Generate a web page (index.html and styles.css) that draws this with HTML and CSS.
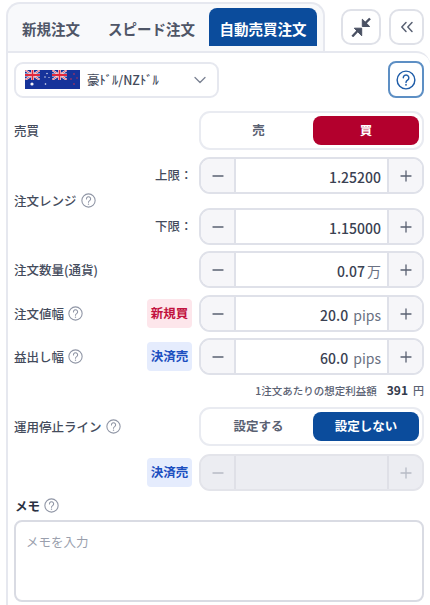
FILE: index.html
```html
<!DOCTYPE html>
<html lang="ja">
<head>
<meta charset="utf-8">
<title>自動売買注文</title>
<link rel="stylesheet" href="styles.css">
</head>
<body>
<svg class="defs" width="0" height="0" aria-hidden="true">
  <defs>
    <symbol id="q" viewBox="0 0 14 14">
      <circle cx="7" cy="7" r="6.2" fill="none" stroke="currentColor" stroke-width="1"/>
      <path d="M5.1 5.5a1.95 1.95 0 1 1 3 1.6c-.7.45-1.1.8-1.1 1.6" fill="none" stroke="currentColor" stroke-width="1" stroke-linecap="round"/>
      <circle cx="7" cy="10.4" r=".65" fill="currentColor"/>
    </symbol>
    <symbol id="minus" viewBox="0 0 12 12"><path d="M1 6h10" stroke="currentColor" stroke-width="1.3" stroke-linecap="round"/></symbol>
    <symbol id="plus" viewBox="0 0 12 12"><path d="M1 6h10M6 1v10" stroke="currentColor" stroke-width="1.3" stroke-linecap="round"/></symbol>
    <symbol id="jack" viewBox="0 0 15 10">
      <rect width="15" height="10" fill="#16339a"/>
      <path d="M0 0l15 10M15 0L0 10" stroke="#f4f4f8" stroke-width="2"/>
      <path d="M0 0l15 10M15 0L0 10" stroke="#e0354a" stroke-width=".8"/>
      <path d="M7.5 0v10M0 5h15" stroke="#f4f4f8" stroke-width="3"/>
      <path d="M7.5 0v10M0 5h15" stroke="#e0283c" stroke-width="1.8"/>
    </symbol>
  </defs>
</svg>
<div class="top">
  <div class="tabs">
    <div class="tab">新規注文</div>
    <div class="tab tab-speed">スピード注文</div>
    <div class="tab tab-active">自動売買注文</div>
  </div>
  <div class="top-btns">
    <button class="icon-btn btn-collapse" aria-label="縮小">
      <svg width="20" height="20" viewBox="0 0 20 20"><path d="M11.3 2.2v7.3h7.4Z" fill="#4a5163" stroke="#4a5163" stroke-linejoin="round"/><path d="M13.5 7 19 1.5" stroke="#4a5163" stroke-width="2.4"/><path d="M3.3 11.2h7.4v7.6Z" fill="#4a5163" stroke="#4a5163" stroke-linejoin="round"/><path d="M6.5 14 1.3 19.5" stroke="#4a5163" stroke-width="2.4"/></svg>
    </button>
    <button class="icon-btn btn-back" aria-label="閉じる">
      <svg width="14" height="12" viewBox="0 0 14 12"><path d="M6 1.5 1.8 6 6 10.5M12 1.5 7.8 6l4.2 4.5" fill="none" stroke="#5a6274" stroke-width="1.5" stroke-linecap="round" stroke-linejoin="round"/></svg>
    </button>
  </div>
</div>
<main class="panel">
  <div class="pair-row">
    <div class="select">
      <svg class="flag" width="55" height="19" viewBox="0 0 55 19">
        <rect width="55" height="19" fill="#16339a"/>
        <use href="#jack" x="0" y="0" width="15" height="10"/>
        <use href="#jack" x="27" y="0" width="15" height="10"/>
        <g fill="#f4f4f8"><circle cx="7" cy="14" r="1.6"/><circle cx="20" cy="7" r=".7"/><circle cx="22" cy="3.5" r=".7"/><circle cx="20.5" cy="14" r=".8"/><circle cx="24" cy="7.5" r=".6"/></g>
        <g fill="#d6324a"><circle cx="49" cy="4" r=".8"/><circle cx="46" cy="9" r=".8"/><circle cx="52" cy="8" r=".7"/><circle cx="49" cy="14" r=".8"/></g>
      </svg>
      <span class="pair-name">豪ﾄﾞﾙ/NZﾄﾞﾙ</span>
      <svg class="chev" width="14" height="8" viewBox="0 0 14 8"><path d="M2 1.5 7 6.5l5-5" fill="none" stroke="#7b8293" stroke-width="1.3" stroke-linecap="round" stroke-linejoin="round"/></svg>
    </div>
    <button class="help-btn" aria-label="ヘルプ"><svg width="20" height="20"><use href="#q"/></svg></button>
  </div>

  <div class="row row-side">
    <div class="label">売買</div>
    <div class="toggle"><span class="opt">売</span><span class="opt opt-buy">買</span></div>
  </div>

  <div class="range">
    <div class="label">注文レンジ<svg class="qi"><use href="#q"/></svg></div>
    <div class="range-rows">
      <div class="row row-upper">
        <span class="limit">上限：</span>
        <div class="stepper"><span class="sb"><svg width="12" height="12"><use href="#minus"/></svg></span><span class="val">1.25200</span><span class="sb"><svg width="12" height="12"><use href="#plus"/></svg></span></div>
      </div>
      <div class="row row-lower">
        <span class="limit">下限：</span>
        <div class="stepper"><span class="sb"><svg width="12" height="12"><use href="#minus"/></svg></span><span class="val">1.15000</span><span class="sb"><svg width="12" height="12"><use href="#plus"/></svg></span></div>
      </div>
    </div>
  </div>

  <div class="row row-qty">
    <div class="label">注文数量(通貨)</div>
    <div class="stepper"><span class="sb"><svg width="12" height="12"><use href="#minus"/></svg></span><span class="val">0.07<span class="unit unit-man">万</span></span><span class="sb"><svg width="12" height="12"><use href="#plus"/></svg></span></div>
  </div>

  <div class="row row-width">
    <div class="label">注文値幅<svg class="qi"><use href="#q"/></svg></div>
    <span class="tag tag-buy">新規買</span>
    <div class="stepper"><span class="sb"><svg width="12" height="12"><use href="#minus"/></svg></span><span class="val">20.0<span class="unit">pips</span></span><span class="sb"><svg width="12" height="12"><use href="#plus"/></svg></span></div>
  </div>

  <div class="row row-profit">
    <div class="label">益出し幅<svg class="qi"><use href="#q"/></svg></div>
    <span class="tag tag-sell">決済売</span>
    <div class="stepper"><span class="sb"><svg width="12" height="12"><use href="#minus"/></svg></span><span class="val">60.0<span class="unit">pips</span></span><span class="sb"><svg width="12" height="12"><use href="#plus"/></svg></span></div>
  </div>

  <div class="estimate">1注文あたりの想定利益額<b>391</b><span class="yen">円</span></div>

  <div class="row row-stop">
    <div class="label">運用停止ライン<svg class="qi"><use href="#q"/></svg></div>
    <div class="toggle"><span class="opt">設定する</span><span class="opt opt-on">設定しない</span></div>
  </div>

  <div class="row row-off">
    <span class="tag tag-sell">決済売</span>
    <div class="stepper stepper-off"><span class="sb"><svg width="12" height="12"><use href="#minus"/></svg></span><span class="val"></span><span class="sb"><svg width="12" height="12"><use href="#plus"/></svg></span></div>
  </div>

  <div class="memo-label">メモ<svg class="qi"><use href="#q"/></svg></div>
  <div class="memo">メモを入力</div>
</main>
</body>
</html>
```
FILE: styles.css
```css
* { box-sizing: border-box; }
html, body { margin: 0; padding: 0; }
body {
  width: 430px;
  height: 605px;
  overflow: hidden;
  background: #fff;
  font-family: "Noto Sans CJK JP", "Noto Sans", sans-serif;
  color: #444b5c;
  font-size: 12.5px;
}
.defs { position: absolute; }
.top {
  display: flex;
  margin-left: 6px;
  padding-top: 2px;
  height: 51px;
}
.tabs {
  width: 319px;
  height: 49px;
  display: flex;
  padding: 4px 6px 0 0;
  background: #f8f9fb;
  border: 2px solid #e6e8ef;
  border-bottom: 0;
  border-radius: 14px 14px 0 0;
}
.tab {
  height: 38px;
  font-size: 14.5px;
  font-weight: 700;
  color: #4f5667;
  line-height: 41px;
  padding-left: 14px;
  width: 94px;
  white-space: nowrap;
}
.tab-speed { width: 107px; padding-left: 6px; }
.tab-active {
  width: 108px;
  padding-left: 0;
  text-align: center;
  background: #0b4c9c;
  color: #fff;
  border-radius: 8px 8px 0 0;
}
.top-btns { display: flex; gap: 8px; margin-left: 16px; padding-top: 7px; align-items: flex-start; }
.icon-btn {
  height: 36px;
  padding: 0;
  background: #fff;
  border: 2px solid #dfe1e8;
  border-radius: 10px;
  display: flex;
  align-items: center;
  justify-content: center;
}
.btn-collapse { width: 40px; }
.btn-back { width: 35px; }
.panel {
  margin-left: 6px;
  height: 554px;
  padding: 8px 6px 0 6px;
  border-left: 2px solid #e6e8ef;
  border-top: 2px solid #e6e8ef;
  border-top-right-radius: 14px;
}
.pair-row {
  display: flex;
  justify-content: space-between;
  align-items: center;
  height: 37px;
}
.select {
  width: 205px;
  height: 36px;
  display: flex;
  align-items: center;
  border: 2px solid #e6e8ef;
  border-radius: 9px;
  padding-left: 9px;
}
.flag { flex: none; }
.pair-name { margin-left: 7px; font-size: 12.5px; font-weight: 500; width: 95px; white-space: nowrap; }
.chev { margin-left: 11px; }
.help-btn {
  width: 36px;
  height: 37px;
  padding: 0;
  background: #fff;
  border: 2px solid #5d8fc4;
  border-radius: 8px;
  color: #1e5ca8;
  display: flex;
  align-items: center;
  justify-content: center;
}
.row { display: flex; align-items: center; }
.label {
  display: flex;
  align-items: center;
  font-size: 12.5px;
  font-weight: 500;
  white-space: nowrap;
}
.qi { width: 15px; height: 15px; margin-left: 4px; color: #8f95a5; }
.row-side { justify-content: space-between; margin-top: 13px; height: 39px; }
.toggle {
  width: 225px;
  height: 39px;
  display: flex;
  align-items: center;
  padding: 0 3px;
  border: 2px solid #e9ebf1;
  border-radius: 11px;
  background: #fff;
}
.opt {
  flex: 1;
  height: 29px;
  line-height: 28px;
  text-align: center;
  font-size: 12.5px;
  font-weight: 700;
  color: #5a6172;
  border-radius: 8px;
}
.opt-buy, .opt-on { flex: none; width: 106px; color: #fff; }
.opt-buy { background: #b3002d; }
.opt-on { background: #0b4c9c; }
.range {
  display: flex;
  justify-content: space-between;
  align-items: center;
  margin-top: 7px;
}
.range .label { margin-top: -2px; }
.range-rows { display: flex; flex-direction: column; gap: 14px; align-items: flex-end; }
.range-rows .row { gap: 10px; }
.limit { font-size: 12.5px; font-weight: 500; width: 34px; white-space: nowrap; margin-top: -2px; }
.stepper {
  width: 225px;
  height: 37px;
  flex: none;
  display: flex;
  border: 2px solid #dfe1e9;
  border-radius: 11px;
  overflow: hidden;
  background: #fff;
  color: #3a4152;
}
.sb {
  width: 33px;
  flex: none;
  background: #f6f6f9;
  color: #5a6172;
  display: flex;
  align-items: center;
  justify-content: center;
}
.val {
  flex: 1;
  border-left: 2px solid #dfe1e9;
  border-right: 2px solid #dfe1e9;
  text-align: right;
  padding-right: 6px;
  font-size: 14px;
  font-weight: 500;
  line-height: 36px;
}
.unit { font-weight: 400; color: #6a7182; margin-left: 5px; font-size: 14px; }
.unit-man { margin-left: 2px; }
.row-qty { justify-content: space-between; margin-top: 6px; }
.row-width { margin-top: 7px; }
.row-profit { margin-top: 6px; }
.tag {
  width: 45px;
  height: 29px;
  flex: none;
  border-radius: 4px;
  font-size: 12.5px;
  font-weight: 700;
  line-height: 28px;
  text-align: center;
  margin-right: 7px;
  white-space: nowrap;
}
.row-width .tag, .row-profit .tag { margin-left: auto; }
.tag-buy { background: #fde6eb; color: #c2123f; }
.tag-sell { background: #e5ecfd; color: #1c4fc0; }
.estimate {
  display: flex;
  justify-content: flex-end;
  align-items: baseline;
  height: 20px;
  margin-top: 5px;
  font-size: 10.5px;
  font-weight: 500;
  color: #5a6172;
  line-height: 20px;
}
.estimate b { font-size: 12px; font-weight: 700; color: #333a4b; margin-left: 10px; }
.yen { margin-left: 5px; font-size: 11px; }
.row-stop { justify-content: space-between; margin-top: 7px; }
.row-off { justify-content: flex-end; margin-top: 8px; }
.stepper-off { background: #ecedf2; border-color: #e3e4ea; }
.stepper-off .sb { background: #ecedf2; color: #b6bac5; }
.stepper-off .val { border-color: #dfe0e7; }
.memo-label {
  display: flex;
  align-items: center;
  margin-top: 5px;
  height: 18px;
  font-size: 12.5px;
  font-weight: 700;
  color: #2b3142;
  padding-left: 1px;
}
.memo {
  height: 82px;
  margin-top: 6px;
  border: 2px solid #d9dbe3;
  border-radius: 8px;
  padding: 10px 10px;
  font-size: 12.5px;
  color: #9a9fad;
  line-height: 20px;
  background: #fff;
}
```
